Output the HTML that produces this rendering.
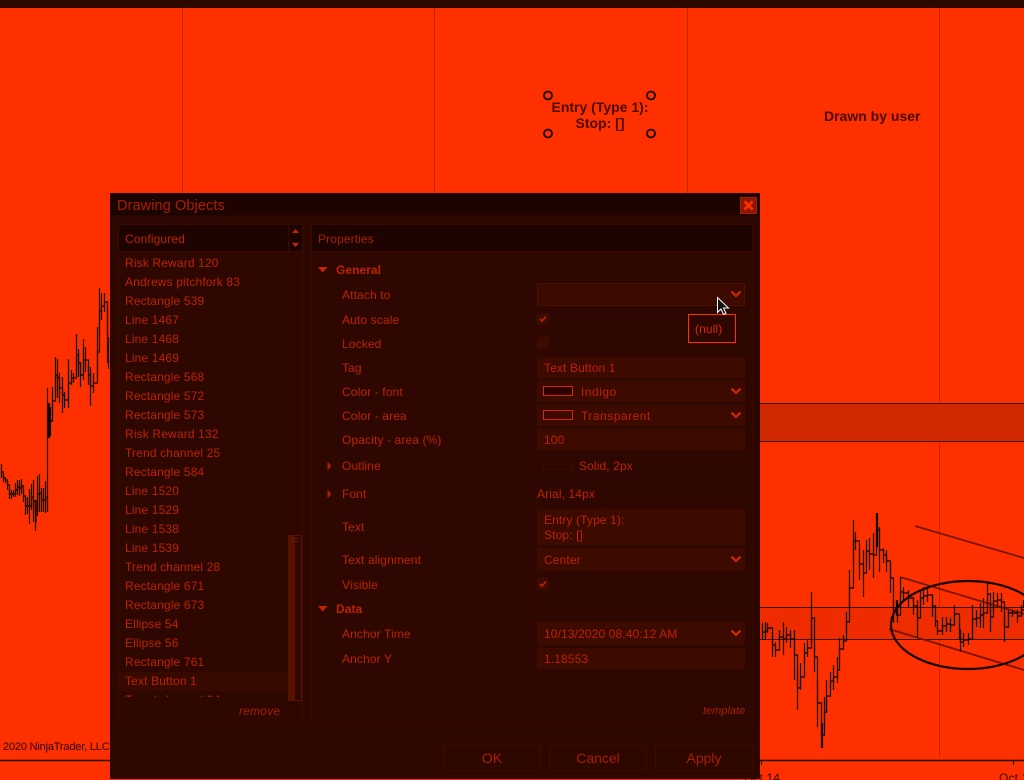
<!DOCTYPE html>
<html><head><meta charset="utf-8"><style>
html,body{margin:0;padding:0;width:1024px;height:780px;overflow:hidden;background:#ff3000}
*{box-sizing:border-box}
body{font-family:"Liberation Sans",sans-serif;font-size:12px;color:#bd2200;position:relative}
.a{position:absolute}
.t{position:absolute;white-space:nowrap;line-height:14px;letter-spacing:.12px}
.h{position:absolute;white-space:nowrap;line-height:14px;font-weight:bold;letter-spacing:.05px}
.i{position:absolute;left:537px;width:208px;background:#3d0a00}
.cb{position:absolute;left:537px;width:12px;height:12px;background:#3d0a00}
.sw{position:absolute;left:543px;width:30px;height:10px;border:1px solid #d42800}
.btn{position:absolute;top:745px;width:98px;height:26px;border:1px solid #3d0a00;font-size:14px;line-height:24px;text-align:center;color:#a81e00}
.row{height:19px;line-height:19px;padding-left:6px;white-space:nowrap;letter-spacing:.15px}
</style></head><body>
<svg class="a" style="left:0;top:0" width="1024" height="780" viewBox="0 0 1024 780">
<rect width="1024" height="8" fill="#2b0800"/>
<g stroke="#c42500" stroke-width="1">
<path d="M182.500 8V760M434.500 8V760M687.500 8V760M939.500 8V757"/>
</g>
<rect x="760" y="404" width="264" height="37" fill="#d02800"/>
<rect x="760" y="608" width="264" height="31" fill="#ee2c00"/>
<path d="M760 403.500H1024M760 441.500H1024M760 607.500H1024M760 639.500H1024" stroke="#3a0a00" stroke-width="1"/>
<path d="M0 760.500H1024" stroke="#1a0400" stroke-width="1.500"/>
<path d="M761.500 761V765M1013.500 761V765" stroke="#1a0400"/>
<g fill="none" stroke="#7a1500" stroke-width="1.800">
<path d="M915 526L1024 558"/>
<path d="M900 577L1024 614"/>
<path d="M889 629L1024 670"/>
</g>
<g fill="none" stroke="#120300" stroke-width="1.200">
<path d="M1.500 464V478M3.500 475V482M5.500 478V483M7.500 481V490M9.500 489V499M11.500 490V499M13.500 490V497M15.500 483V497M17.500 480V495M19.500 480V496M21.500 479V494M23.500 490V502M25.500 498V515M27.500 497V514M29.500 489V524M31.500 484V510M33.500 480V522M35.500 500V531M36 500V523M37.500 476V512M39.500 474V512M41.500 488V512M43.500 488V512M45.500 481V513"/>
</g>
<g fill="none" stroke="#120300" stroke-width="1.200" transform="translate(.5 0)">
<path d="M1 472H3V478H5V480H7V485H9V494H13V494H15V490H17V487H19V488H21V486H23V496H25V506H29V506H31V497H33V501H35V515H37V494H39V493H41V500H45V497H47V512"/>
<path d="M47 388V512M48 403V438M49 403V438M50 407V436M52 387V415M55 357V392M57 359V398M59 373V403M62 377V413M64 392V408M68 359V408M71 370V385M73 373V383M76 334V377M78 349V377M80 362V387M83 339V380M85 347V372M88 365V385M90 367V406M93 373V393M97 327V377M99 288V335M101 293V320M104 293V312M107 308V363M108 337V369"/>
<path d="M48 420H50V421H52V401H55V375H57V378H59V388H62V395H64V400H68V383H71V378H73V378H76V355H78V363H80V375H83V360H85V360H88V375H90V386H93V383H97V352H99V311H101V306H104V302H107V335H108"/>
<path d="M762 623V640M765 622V640M767 623V633M772 633V657M775 642V657M779 630V643M783 622V655M786 627V643M790 630V648M794 630V680M797 667V710M800 663V690M804 643V663M807 640V657M811 592V643M814 643V672M817 680V727M821 723V748M822 723V748M824 697V728M826 680V713M830 672V690M833 665V690M837 657V683M839 638V660M843 635V647M846 612V633M849 570V607M853 520V563M855 532V550M859 548V580M863 550V597M866 540V563M869 538V570M873 533V578M876 513V547M877 513V547M879 527V572M883 548V563M886 550V572M890 563V593M893 600V623M896 600V613M897 600V623M900 577V607M903 587V600M908 590V607M913 597V615M917 600V637M920 590V607M923 587V605M927 588V602M932 595V617M935 615V627M937 627V635M942 617V635M946 617V632M950 618V632M954 605V623M959 620V640M960 632V652M963 633V647M968 633V645M972 605V633M976 610V627M980 603V628M983 598V628M987 582V607M990 603V632M993 592V610M997 593V607M1001 593V612M1004 612V642M1008 610V617M1012 610V617M1017 610V623M1021 605V615M1023 600V608"/>
<path d="M762 632H765V631H767V628H772V645H775V650H779V637H783V639H786V635H790V639H794V655H797V688H800V677H804V653H807V648H811V618H814V657H817V703H821V735H824V712H826V696H830V681H833V677H837V670H839V649H843V641H846V622H849V588H853V541H859V564H863V573H866V551H869V554H873V555H876V530H879V550H883V555H886V561H890V578H893V611H896V615H900V592H903V593H908V598H913V606H917V618H920V598H923V596H927V595H932V606H935V621H937V631H942V626H946V624H950V625H954V614H959V630H960V642H963V640H968V639H972V619H976V618H980V615H983V613H987V594H990V617H993V601H997V600H1001V602H1004V627H1008V613H1012V613H1017V616H1021V610H1024"/>
</g>
<ellipse cx="968" cy="625" rx="77" ry="44" fill="none" stroke="#140300" stroke-width="2.200"/>
<g fill="none" stroke="#140300" stroke-width="1.800">
<circle cx="548" cy="95.500" r="4"/><circle cx="651" cy="95.500" r="4"/><circle cx="548" cy="133.500" r="4"/><circle cx="651" cy="133.500" r="4"/>
</g>
</svg>
<div class="a" style="left:530px;top:99px;width:140px;text-align:center;font-weight:bold;font-size:14px;line-height:16px;color:#4a0d00">Entry (Type 1):<br>Stop: []</div>
<div class="t" style="left:824px;top:108px;font-weight:bold;font-size:14px;line-height:16px;color:#4a0d00;letter-spacing:0">Drawn by user</div>
<div class="t" style="left:3px;top:740px;font-size:11px;color:#2a0600;letter-spacing:-.18px">2020 NinjaTrader, LLC</div>
<div class="t" style="left:744px;top:771px;font-size:12px;color:#3a0a00">Oct 14</div>
<div class="t" style="left:999px;top:771px;font-size:12px;color:#3a0a00">Oct 1</div>

<!-- dialog -->
<div class="a" style="left:110px;top:193px;width:650px;height:586px;background:#2e0800;border:1px solid #240600"></div>
<div class="a" style="left:111px;top:194px;width:648px;height:22px;background:#1e0400;border-bottom:1px solid #280600"></div>
<div class="t" style="left:117px;top:198px;font-size:14.500px;line-height:17px;color:#a81e00;letter-spacing:.1px">Drawing Objects</div>
<div class="a" style="left:740px;top:197px;width:17px;height:17px;background:#8a1800;border:1px solid #a81e00"></div>
<svg class="a" style="left:743px;top:200px" width="11" height="11"><path d="M1.500 1.500L9.500 9.500M9.500 1.500L1.500 9.500" stroke="#ff3000" stroke-width="2.800"/></svg>

<!-- left panel -->
<div class="a" style="left:118px;top:224px;width:185px;height:500px;border:1px solid #3a0a00"></div>
<div class="a" style="left:119px;top:225px;width:183px;height:27px;background:#1e0400;border-bottom:1px solid #3a0a00"></div>
<div class="a" style="left:288px;top:225px;width:1px;height:27px;background:#3a0a00"></div>
<div class="t" style="left:125px;top:232px">Configured</div>
<svg class="a" style="left:291px;top:227px" width="10" height="24"><path d="M1 6L4.500 2L8 6ZM1 16H8L4.500 20Z" fill="#c42500"/></svg>
<div class="a" style="left:119px;top:254px;width:169px;height:443px;overflow:hidden">
<div class="row">Risk Reward 120</div>
<div class="row">Andrews pitchfork 83</div>
<div class="row">Rectangle 539</div>
<div class="row">Line 1467</div>
<div class="row">Line 1468</div>
<div class="row">Line 1469</div>
<div class="row">Rectangle 568</div>
<div class="row">Rectangle 572</div>
<div class="row">Rectangle 573</div>
<div class="row">Risk Reward 132</div>
<div class="row">Trend channel 25</div>
<div class="row">Rectangle 584</div>
<div class="row">Line 1520</div>
<div class="row">Line 1529</div>
<div class="row">Line 1538</div>
<div class="row">Line 1539</div>
<div class="row">Trend channel 28</div>
<div class="row">Rectangle 671</div>
<div class="row">Rectangle 673</div>
<div class="row">Ellipse 54</div>
<div class="row">Ellipse 56</div>
<div class="row">Rectangle 761</div>
<div class="row" style="background:#380900">Text Button 1</div>
<div class="row">Trend channel 34</div>
</div>
<div class="a" style="left:288px;top:535px;width:14px;height:166px;border:1px solid #5a1200"></div>
<div class="a" style="left:288px;top:535px;width:7px;height:166px;background:#5a1200"></div>
<div class="a" style="left:291px;top:538px;width:8px;height:4px;border-top:1px solid #6a1500;border-bottom:1px solid #6a1500"></div>
<div class="t" style="left:239px;top:704px;font-style:italic;color:#a81e00;font-size:12px;letter-spacing:.2px">remove</div>

<!-- right panel -->
<div class="a" style="left:311px;top:224px;width:442px;height:500px;border:1px solid #3a0a00"></div>
<div class="a" style="left:312px;top:225px;width:440px;height:27px;background:#1e0400;border-bottom:1px solid #3a0a00"></div>
<div class="t" style="left:318px;top:232px;color:#a81e00">Properties</div>
<div class="a" style="left:531px;top:283px;width:1px;height:345px;background:#340900"></div>

<svg class="a" style="left:318px;top:267px" width="10" height="6"><path d="M0 0H9.500L4.700 5.500Z" fill="#c42500"/></svg>
<div class="h" style="left:336px;top:263px">General</div>
<div class="t" style="left:342px;top:288px">Attach to</div>
<div class="t" style="left:342px;top:313px">Auto scale</div>
<div class="t" style="left:342px;top:337px">Locked</div>
<div class="t" style="left:342px;top:361px">Tag</div>
<div class="t" style="left:342px;top:385px">Color - font</div>
<div class="t" style="left:342px;top:409px">Color - area</div>
<div class="t" style="left:342px;top:433px">Opacity - area (%)</div>
<svg class="a" style="left:327px;top:461px" width="5" height="10"><path d="M0.500 0.500L4.500 5L0.500 9.500Z" fill="#a81e00"/></svg>
<div class="t" style="left:342px;top:459px">Outline</div>
<svg class="a" style="left:327px;top:489px" width="5" height="10"><path d="M0.500 0.500L4.500 5L0.500 9.500Z" fill="#a81e00"/></svg>
<div class="t" style="left:342px;top:487px">Font</div>
<div class="t" style="left:342px;top:520px">Text</div>
<div class="t" style="left:342px;top:553px">Text alignment</div>
<div class="t" style="left:342px;top:578px">Visible</div>
<svg class="a" style="left:318px;top:606px" width="10" height="6"><path d="M0 0H9.500L4.700 5.500Z" fill="#c42500"/></svg>
<div class="h" style="left:336px;top:602px">Data</div>
<div class="t" style="left:342px;top:627px">Anchor Time</div>
<div class="t" style="left:342px;top:652px">Anchor Y</div>

<div class="i" style="top:283px;height:23px;border:1px solid #4a1200;background:#3d0a00"></div>
<svg class="a" style="left:730px;top:290px" width="12" height="8"><path d="M1.500 1.500L6 6L10.500 1.500" fill="none" stroke="#d02800" stroke-width="2.200"/></svg>
<div class="cb" style="top:313px"></div>
<svg class="a" style="left:539px;top:315px" width="8" height="8"><path d="M1 4L3 6L7 1.500" fill="none" stroke="#c42500" stroke-width="1.600"/></svg>
<div class="cb" style="top:337px"></div>
<div class="i" style="top:357px;height:21px"></div><div class="t" style="left:544px;top:361px">Text Button 1</div>
<div class="i" style="top:381px;height:21px"></div><div class="sw" style="top:386px;background:#2a0000"></div><div class="t" style="left:581px;top:385px;letter-spacing:.5px">Indigo</div>
<svg class="a" style="left:730px;top:387px" width="12" height="8"><path d="M1.500 1.500L6 6L10.500 1.500" fill="none" stroke="#d02800" stroke-width="2.200"/></svg>
<div class="i" style="top:405px;height:21px"></div><div class="sw" style="top:410px"></div><div class="t" style="left:581px;top:409px;letter-spacing:.5px">Transparent</div>
<svg class="a" style="left:730px;top:411px" width="12" height="8"><path d="M1.500 1.500L6 6L10.500 1.500" fill="none" stroke="#d02800" stroke-width="2.200"/></svg>
<div class="i" style="top:429px;height:21px"></div><div class="t" style="left:544px;top:433px">100</div>
<div class="a" style="left:543px;top:460px;width:30px;height:10px;border:1px solid #3d0a00"></div>
<div class="t" style="left:579px;top:459px">Solid, 2px</div>
<div class="t" style="left:537px;top:487px">Arial, 14px</div>
<div class="i" style="top:509px;height:36px"></div><div class="t" style="left:544px;top:513px;line-height:15px;white-space:pre">Entry (Type 1):
Stop: []</div>
<div class="i" style="top:548px;height:23px"></div><div class="t" style="left:544px;top:553px">Center</div>
<svg class="a" style="left:730px;top:555px" width="12" height="8"><path d="M1.500 1.500L6 6L10.500 1.500" fill="none" stroke="#d02800" stroke-width="2.200"/></svg>
<div class="cb" style="top:578px"></div>
<svg class="a" style="left:539px;top:580px" width="8" height="8"><path d="M1 4L3 6L7 1.500" fill="none" stroke="#c42500" stroke-width="1.600"/></svg>
<div class="i" style="top:622px;height:23px"></div><div class="t" style="left:544px;top:627px">10/13/2020 08:40:12 AM</div>
<svg class="a" style="left:730px;top:629px" width="12" height="8"><path d="M1.500 1.500L6 6L10.500 1.500" fill="none" stroke="#d02800" stroke-width="2.200"/></svg>
<div class="i" style="top:648px;height:21px"></div><div class="t" style="left:544px;top:652px">1.18553</div>
<div class="t" style="left:703px;top:704px;font-style:italic;font-size:11px;color:#a81e00;letter-spacing:0">template</div>

<div class="btn" style="left:443px">OK</div>
<div class="btn" style="left:549px">Cancel</div>
<div class="btn" style="left:655px">Apply</div>

<div class="a" style="left:688px;top:314px;width:48px;height:29px;border:1px solid #ff3000;background:#2e0800"></div>
<div class="t" style="left:695px;top:322px;color:#d42800">(null)</div>
<svg class="a" style="left:716px;top:296px" width="14" height="21"><path d="M1.500 1.500V16.500L5 13L7.500 18.500L10 17.500L7.500 12H12.500Z" fill="#111" stroke="#fff" stroke-width="1"/></svg>
</body></html>
